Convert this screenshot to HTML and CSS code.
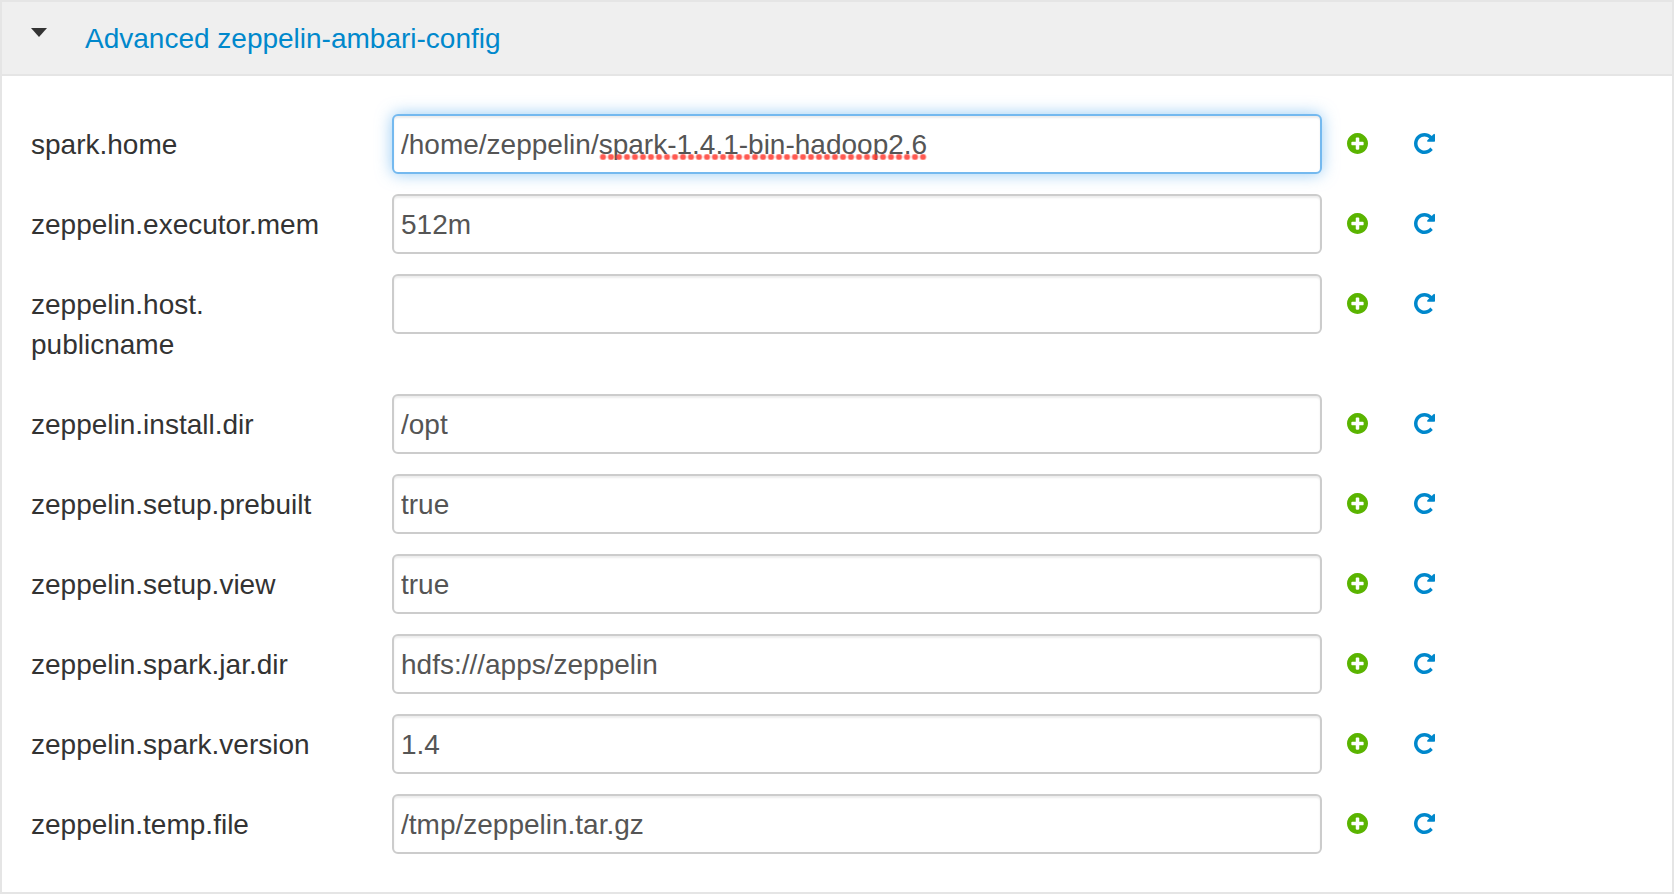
FILE: index.html
```html
<!DOCTYPE html>
<html lang="en">
<head>
<meta charset="utf-8">
<title>Advanced zeppelin-ambari-config</title>
<link rel="stylesheet" href="styles.css">
</head>
<body>
<svg class="sprite" aria-hidden="true">
  <symbol id="icon-plus" viewBox="0 0 1536 1536">
    <path fill-rule="evenodd" d="M1216 832v-128q0-26-19-45t-45-19h-256v-256q0-26-19-45t-45-19h-128q-26 0-45 19t-19 45v256h-256q-26 0-45 19t-19 45v128q0 26 19 45t45 19h256v256q0 26 19 45t45 19h128q26 0 45-19t19-45v-256h256q26 0 45-19t19-45zM1536 768q0 209-103 385.500t-279.500 279.500-385.500 103-385.500-103-279.500-279.500-103-385.500 103-385.500 279.500-279.500 385.500-103 385.500 103 279.500 279.500 103 385.500z"/>
  </symbol>
  <symbol id="icon-repeat" viewBox="0 0 1536 1536">
    <path d="M1536 128v448q0 26-19 45t-45 19h-448q-42 0-59-40-17-39 14-69l138-138q-148-137-349-137-104 0-198.500 40.500t-163.500 109.500-109.500 163.500-40.500 198.500 40.500 198.500 109.500 163.500 163.500 109.500 198.500 40.500q119 0 225-52t179-147q7-10 23-12 14 0 25 9l137 138q9 8 9.500 20.500t-7.500 22.500q-109 132-264 204.500t-327 72.500q-156 0-298-61t-245-164-164-245-61-298 61-298 164-245 245-164 298-61q147 0 284.500 55.500t244.500 156.500l130-129q29-31 70-14 39 17 39 59z"/>
  </symbol>
</svg>
<section class="panel">
  <header class="panel-header">
    <span class="caret"></span>
    <a class="panel-title" href="#config">Advanced zeppelin-ambari-config</a>
  </header>
  <form class="config" id="config">
    <div class="row">
      <label class="label" for="f1">spark.<wbr>home</label>
      <div class="field">
        <input class="input is-active" id="f1" type="text" spellcheck="false" value="/home/zeppelin/spark-1.4.1-bin-hadoop2.6">
        <span class="spelling"></span>
      </div>
      <div class="actions">
        <button class="action add" type="button" aria-label="Add override"><svg class="icon"><use href="#icon-plus"/></svg></button>
        <button class="action reset" type="button" aria-label="Reset value"><svg class="icon"><use href="#icon-repeat"/></svg></button>
      </div>
    </div>
    <div class="row">
      <label class="label" for="f2">zeppelin.<wbr>executor.<wbr>mem</label>
      <div class="field"><input class="input" id="f2" type="text" value="512m"></div>
      <div class="actions">
        <button class="action add" type="button" aria-label="Add override"><svg class="icon"><use href="#icon-plus"/></svg></button>
        <button class="action reset" type="button" aria-label="Reset value"><svg class="icon"><use href="#icon-repeat"/></svg></button>
      </div>
    </div>
    <div class="row">
      <label class="label" for="f3">zeppelin.<wbr>host.<wbr>publicname</label>
      <div class="field"><input class="input" id="f3" type="text" value=""></div>
      <div class="actions">
        <button class="action add" type="button" aria-label="Add override"><svg class="icon"><use href="#icon-plus"/></svg></button>
        <button class="action reset" type="button" aria-label="Reset value"><svg class="icon"><use href="#icon-repeat"/></svg></button>
      </div>
    </div>
    <div class="row">
      <label class="label" for="f4">zeppelin.<wbr>install.<wbr>dir</label>
      <div class="field"><input class="input" id="f4" type="text" value="/opt"></div>
      <div class="actions">
        <button class="action add" type="button" aria-label="Add override"><svg class="icon"><use href="#icon-plus"/></svg></button>
        <button class="action reset" type="button" aria-label="Reset value"><svg class="icon"><use href="#icon-repeat"/></svg></button>
      </div>
    </div>
    <div class="row">
      <label class="label" for="f5">zeppelin.<wbr>setup.<wbr>prebuilt</label>
      <div class="field"><input class="input" id="f5" type="text" value="true"></div>
      <div class="actions">
        <button class="action add" type="button" aria-label="Add override"><svg class="icon"><use href="#icon-plus"/></svg></button>
        <button class="action reset" type="button" aria-label="Reset value"><svg class="icon"><use href="#icon-repeat"/></svg></button>
      </div>
    </div>
    <div class="row">
      <label class="label" for="f6">zeppelin.<wbr>setup.<wbr>view</label>
      <div class="field"><input class="input" id="f6" type="text" value="true"></div>
      <div class="actions">
        <button class="action add" type="button" aria-label="Add override"><svg class="icon"><use href="#icon-plus"/></svg></button>
        <button class="action reset" type="button" aria-label="Reset value"><svg class="icon"><use href="#icon-repeat"/></svg></button>
      </div>
    </div>
    <div class="row">
      <label class="label" for="f7">zeppelin.<wbr>spark.<wbr>jar.<wbr>dir</label>
      <div class="field"><input class="input" id="f7" type="text" value="hdfs:///apps/zeppelin"></div>
      <div class="actions">
        <button class="action add" type="button" aria-label="Add override"><svg class="icon"><use href="#icon-plus"/></svg></button>
        <button class="action reset" type="button" aria-label="Reset value"><svg class="icon"><use href="#icon-repeat"/></svg></button>
      </div>
    </div>
    <div class="row">
      <label class="label" for="f8">zeppelin.<wbr>spark.<wbr>version</label>
      <div class="field"><input class="input" id="f8" type="text" value="1.4"></div>
      <div class="actions">
        <button class="action add" type="button" aria-label="Add override"><svg class="icon"><use href="#icon-plus"/></svg></button>
        <button class="action reset" type="button" aria-label="Reset value"><svg class="icon"><use href="#icon-repeat"/></svg></button>
      </div>
    </div>
    <div class="row">
      <label class="label" for="f9">zeppelin.<wbr>temp.<wbr>file</label>
      <div class="field"><input class="input" id="f9" type="text" value="/tmp/zeppelin.tar.gz"></div>
      <div class="actions">
        <button class="action add" type="button" aria-label="Add override"><svg class="icon"><use href="#icon-plus"/></svg></button>
        <button class="action reset" type="button" aria-label="Reset value"><svg class="icon"><use href="#icon-repeat"/></svg></button>
      </div>
    </div>
  </form>
</section>
</body>
</html>
```
FILE: styles.css
```css
* {
  box-sizing: border-box;
}

body {
  margin: 0;
  background: #fff;
  color: #333;
  font-family: "Liberation Sans", Arial, sans-serif;
  font-size: 28px;
  line-height: 40px;
}

.sprite {
  display: none;
}

.panel {
  border: 2px solid #e5e5e5;
}

.panel-header {
  display: flex;
  align-items: flex-start;
  gap: 38px;
  padding: 17px 29px 15px;
  border-bottom: 2px solid #e5e5e5;
  background: #efefef;
}

.caret {
  margin-top: 9px;
  border-top: 9px solid #333;
  border-left: 8px solid transparent;
  border-right: 8px solid transparent;
}

.panel-title {
  color: #0088cc;
  text-decoration: none;
}

.config {
  display: flex;
  flex-direction: column;
  gap: 20px;
  padding: 38px 29px;
}

.row {
  display: grid;
  grid-template-columns: 361px minmax(0, 1fr) 321px;
  align-items: start;
}

.label {
  max-width: 300px;
  padding: 11px 0 9px;
}

.field {
  position: relative;
}

.input {
  display: block;
  width: 100%;
  height: 60px;
  padding: 9px 7px 7px;
  border: 2px solid #ccc;
  border-radius: 6px;
  outline: 0;
  background: #fff;
  box-shadow: inset 0 2px 2px rgba(0, 0, 0, 0.075);
  color: #555;
  font: inherit;
}

.input.is-active,
.input:focus {
  border-color: #74b9ef;
  box-shadow: inset 0 2px 2px rgba(0, 0, 0, 0.075), 0 0 16px rgba(82, 168, 236, 0.6);
}

.spelling {
  position: absolute;
  top: 40px;
  left: 207px;
  width: 328px;
  height: 6px;
  background: radial-gradient(circle at 4px 3px, rgba(255, 60, 50, 0.85) 2px, rgba(255, 60, 50, 0) 4px) 0 0 / 8px 6px;
}

.actions {
  display: flex;
  gap: 46px;
  padding: 19px 25px;
}

.action {
  padding: 0;
  border: 0;
  background: none;
  cursor: pointer;
}

.add {
  color: #5ab400;
}

.reset {
  color: #0088cc;
}

.icon {
  display: block;
  width: 21px;
  height: 21px;
  fill: currentColor;
}
```
